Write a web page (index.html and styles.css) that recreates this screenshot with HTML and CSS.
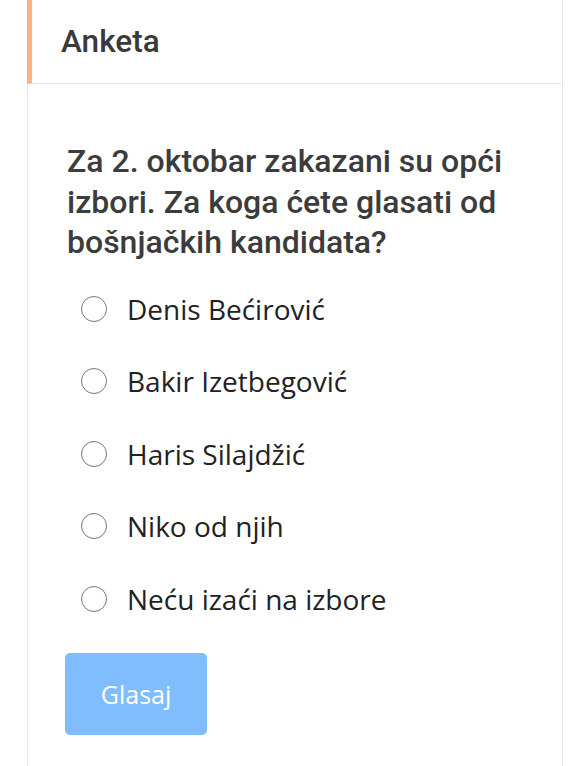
FILE: index.html
```html
<!DOCTYPE html>
<html lang="bs">
<head>
<meta charset="utf-8">
<title>Anketa</title>
<link rel="stylesheet" href="styles.css">
</head>
<body>
<div class="card">
  <div class="card-header">Anketa</div>
  <div class="card-body">
    <p class="question">Za 2. oktobar zakazani su opći izbori. Za koga ćete glasati od bošnjačkih kandidata?</p>
    <div class="options">
      <label class="option"><input type="radio" name="a"><span>Denis Bećirović</span></label>
      <label class="option"><input type="radio" name="a"><span>Bakir Izetbegović</span></label>
      <label class="option"><input type="radio" name="a"><span>Haris Silajdžić</span></label>
      <label class="option"><input type="radio" name="a"><span>Niko od njih</span></label>
      <label class="option"><input type="radio" name="a"><span>Neću izaći na izbore</span></label>
    </div>
    <button class="vote" disabled>Glasaj</button>
  </div>
</div>
</body>
</html>
```

FILE: styles.css
```css
html, body {
  margin: 0;
  padding: 0;
  background: #ffffff;
}
body {
  height: 766px;
  overflow: hidden;
}
.card {
  margin-left: 27px;
  width: 535px;
  border-right: 1px solid #e8e8e8;
  min-height: 766px;
  display: flex;
  flex-direction: column;
}
.card-header {
  height: 83px;
  border-left: 5px solid #ffb07c;
  border-bottom: 1px solid #e8e8e8;
  padding-left: 29px;
  display: flex;
  align-items: center;
  font-family: Roboto, "Liberation Sans", sans-serif;
  font-weight: 500;
  font-size: 31.5px;
  color: #3a3a3a;
}
.card-body {
  flex: 1;
  border-left: 1px solid #e8e8e8;
  padding: 57px 20px 40px 39px;
}
.question {
  margin: 0;
  font-family: Roboto, "Liberation Sans", sans-serif;
  font-weight: 500;
  font-size: 32px;
  line-height: 40.5px;
  color: #3c3c3c;
}
.options {
  margin-top: 27px;
  padding-left: 14px;
  display: flex;
  flex-direction: column;
  gap: 34.6px;
}
.option {
  display: flex;
  align-items: center;
  gap: 20px;
  height: 38px;
  font-family: "Open Sans", "Liberation Sans", sans-serif;
  font-size: 28px;
  line-height: 38px;
  color: #222222;
}
.option input {
  appearance: none;
  -webkit-appearance: none;
  box-sizing: border-box;
  margin: 0;
  width: 26px;
  height: 26px;
  border: 1.6px solid #777777;
  border-radius: 50%;
  background: #ffffff;
  flex: none;
}
.vote {
  margin-top: 35px;
  margin-left: -2px;
  width: 142px;
  height: 82px;
  border: none;
  border-radius: 5px;
  background: #80bdff;
  color: #ffffff;
  font-family: "Open Sans", "Liberation Sans", sans-serif;
  font-size: 25px;
  padding: 0;
}
```
